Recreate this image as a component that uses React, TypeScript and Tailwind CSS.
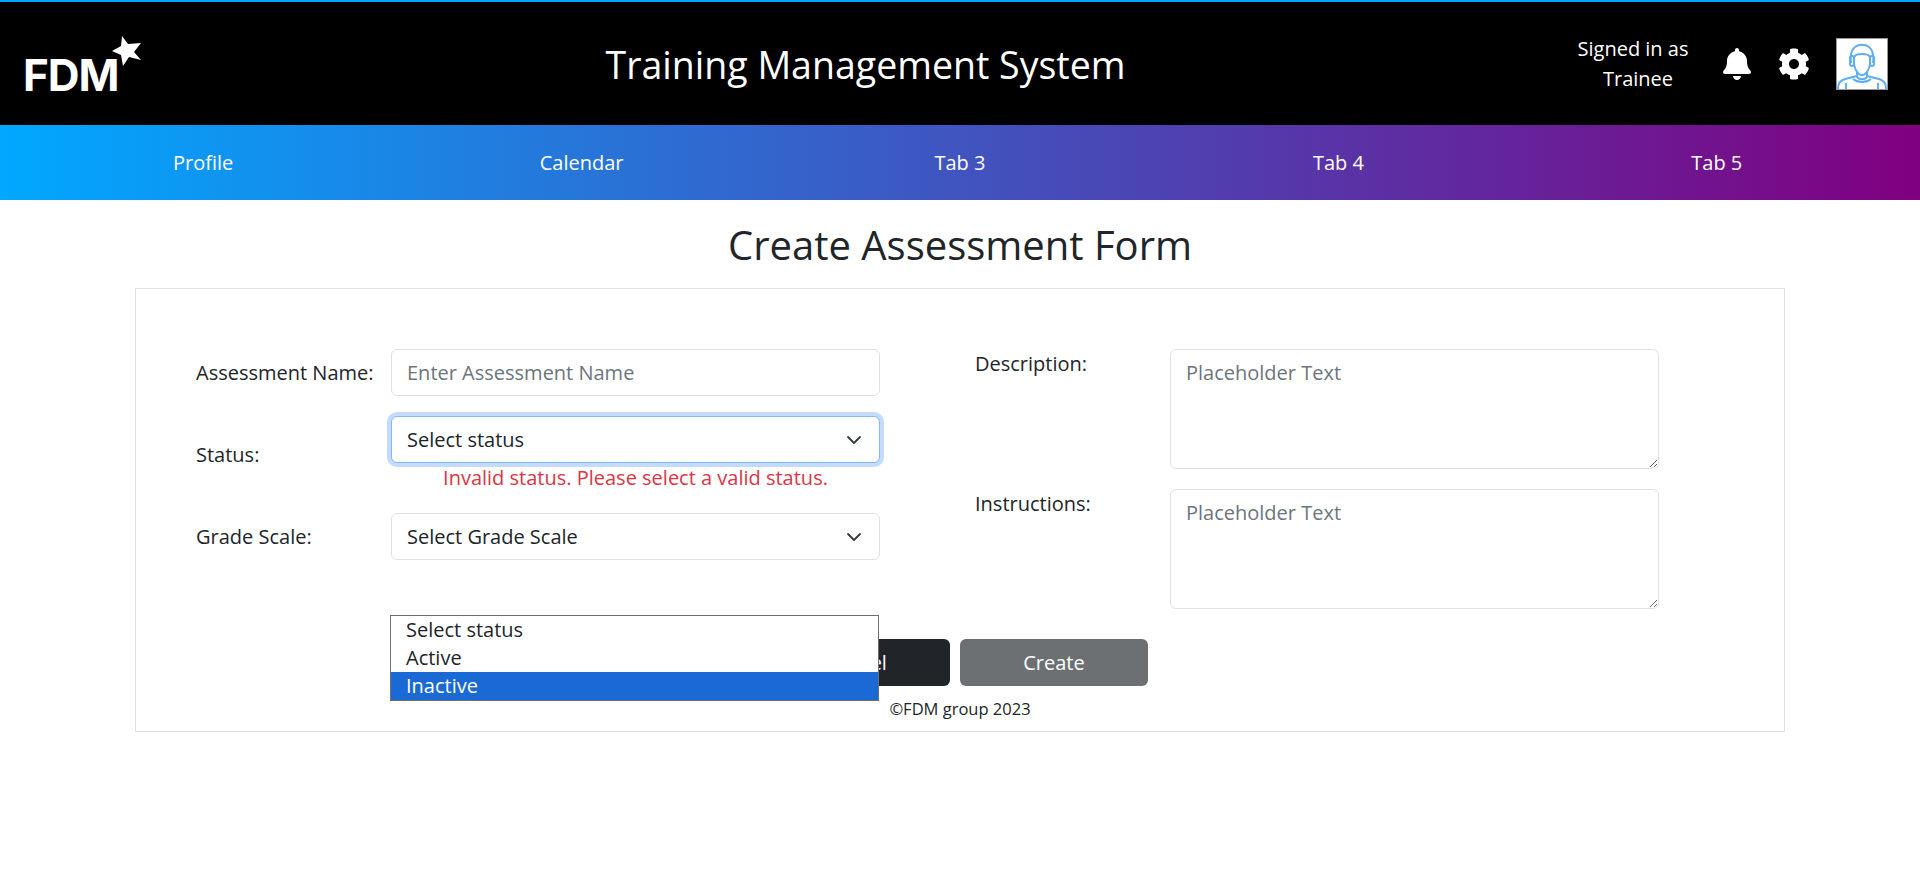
import { FaBell, FaCog } from 'react-icons/fa';

const tabs = ['Profile', 'Calendar', 'Tab 3', 'Tab 4', 'Tab 5'];
const statusOptions = ['Select status', 'Active', 'Inactive'];

function Logo() {
  return (
    <div className="relative h-[60px] w-[129px]">
      <span className="absolute left-[-2px] top-[16px] font-['Inter',sans-serif] text-[44px] font-bold leading-[50px] tracking-[-1px] text-white">
        FDM
      </span>
      <svg viewBox="0 0 34 34" className="absolute left-[85px] top-0 h-[34px] w-[34px]">
        <polygon fill="#fff" points="12,2 18,10 31,9 24,18 31,26 19,23 13,32 11,21 2,17 11,12" />
      </svg>
    </div>
  );
}

function Avatar() {
  return (
    <div className="h-[52px] w-[52px] border border-[#999] bg-white">
      <svg viewBox="0 0 50 50" fill="none" stroke="#5aaef5" strokeWidth="1.9" className="h-full w-full">
        <path d="M14 24c-1-8 0-13 4-16 4-3 10-3 14 0 4 3 5 8 4 16" />
        <path d="M17 18c2-4 14-4 16 0" />
        <path d="M17 18c-1 10 3 18 8 18s9-8 8-18" />
        <rect x="13" y="17" width="4" height="10" rx="2" />
        <rect x="33" y="17" width="4" height="10" rx="2" />
        <path d="M20 33v5c2 3 8 3 10 0v-5" />
        <path d="M1 50c0-6 3-9 7-10l12-3M49 50c0-6-3-9-7-10l-12-3" />
        <path d="M9 44v6M41 44v6M16 40c5 4 13 4 18 0" />
      </svg>
    </div>
  );
}

function Chevron() {
  return (
    <svg viewBox="0 0 16 16" fill="none" stroke="#343a40" strokeWidth="1.8" strokeLinecap="round" strokeLinejoin="round" className="pointer-events-none absolute right-[18px] top-[16px] h-[16px] w-[16px]">
      <path d="m2 5 6 6 6-6" />
    </svg>
  );
}

function SelectBox({ label, focused }: { label: string; focused?: boolean }) {
  return (
    <div className="relative h-[47px] w-[489px]">
      <select
        defaultValue={label}
        className={
          focused
            ? 'h-full w-full appearance-none rounded-[6px] border border-[#86b7fe] bg-white px-[15px] text-[#212529] shadow-[0_0_0_4px_rgba(13,110,253,0.25)] outline-none'
            : 'h-full w-full appearance-none rounded-[6px] border border-[#dee2e6] bg-white px-[15px] text-[#212529] outline-none'
        }
      >
        <option>{label}</option>
      </select>
      <Chevron />
    </div>
  );
}

function TextAreaRow({ label }: { label: string }) {
  return (
    <div className="flex">
      <label className="w-[195px] leading-[30px]">{label}</label>
      <textarea
        placeholder="Placeholder Text"
        className="h-[120px] w-[489px] rounded-[6px] border border-[#dee2e6] px-[15px] py-[8px] leading-[30px] outline-none placeholder:text-[#6c757d]"
      />
    </div>
  );
}

export default function App() {
  return (
    <div className="flex h-[878px] flex-col bg-white font-['Open_Sans',sans-serif] text-[20px] text-[#212529]">
      <header className="flex h-[125px] items-center border-t-2 border-[#00a8ff] bg-black text-white">
        <div className="w-[154px] pl-[25px]">
          <Logo />
        </div>
        <h1 className="flex-1 pt-[2px] text-center text-[37.5px] leading-[54px]">Training Management System</h1>
        <div className="flex items-center">
          <div className="w-[112px] text-center leading-[30px]">
            <div>Signed in as</div>
            <div className="pl-[10px]">Trainee</div>
          </div>
          <FaBell className="ml-[34px] h-[32px] w-[28px]" />
          <FaCog className="ml-[27px] h-[32px] w-[32px]" />
          <div className="ml-[26px] mr-[32px]">
            <Avatar />
          </div>
        </div>
      </header>

      <nav className="grid h-[75px] grid-cols-5 items-center bg-[linear-gradient(to_right,#00a8ff,#800080)] px-[14px] text-white">
        {tabs.map((tab) => (
          <a key={tab} className="text-center">
            {tab}
          </a>
        ))}
      </nav>

      <h2 className="pt-[15px] text-center text-[40px] leading-[60px]">Create Assessment Form</h2>

      <main className="relative mx-[135px] mt-[13px] h-[444px] border border-[#dee2e6] pt-[60px]">
        <div className="flex pl-[60px]">
          <div className="w-[779px]">
            <div className="flex h-[47px] items-center">
              <label className="w-[195px]">Assessment Name:</label>
              <input
                placeholder="Enter Assessment Name"
                className="h-full w-[489px] rounded-[6px] border border-[#dee2e6] px-[15px] outline-none placeholder:text-[#6c757d]"
              />
            </div>
            <div className="mt-[20px] flex">
              <label className="flex h-[77px] w-[195px] items-center">Status:</label>
              <div>
                <SelectBox label="Select status" focused />
                <p className="text-center leading-[30px] text-[#dc3545]">Invalid status. Please select a valid status.</p>
              </div>
            </div>
            <div className="mt-[20px] flex items-center">
              <label className="w-[195px]">Grade Scale:</label>
              <SelectBox label="Select Grade Scale" />
            </div>
          </div>
          <div className="flex flex-col gap-[20px]">
            <TextAreaRow label="Description:" />
            <TextAreaRow label="Instructions:" />
          </div>
        </div>

        <div className="mt-[30px] flex justify-center gap-[10px] pr-[10px]">
          <button className="h-[47px] w-[188px] rounded-[6px] bg-[#212529] text-white">Cancel</button>
          <button className="h-[47px] w-[188px] rounded-[6px] bg-[#6c7073] text-white">Create</button>
        </div>
        <p className="mt-[11px] text-center text-[16.5px] leading-[24px]">©FDM group 2023</p>

        <ul className="absolute left-[254px] top-[326px] w-[489px] border border-[#6f6f6f] bg-white leading-[28px]">
          {statusOptions.map((option) => (
            <li key={option} className={option === 'Inactive' ? 'bg-[#1a69d4] pl-[15px] text-white' : 'pl-[15px]'}>
              {option}
            </li>
          ))}
        </ul>
      </main>
    </div>
  );
}
